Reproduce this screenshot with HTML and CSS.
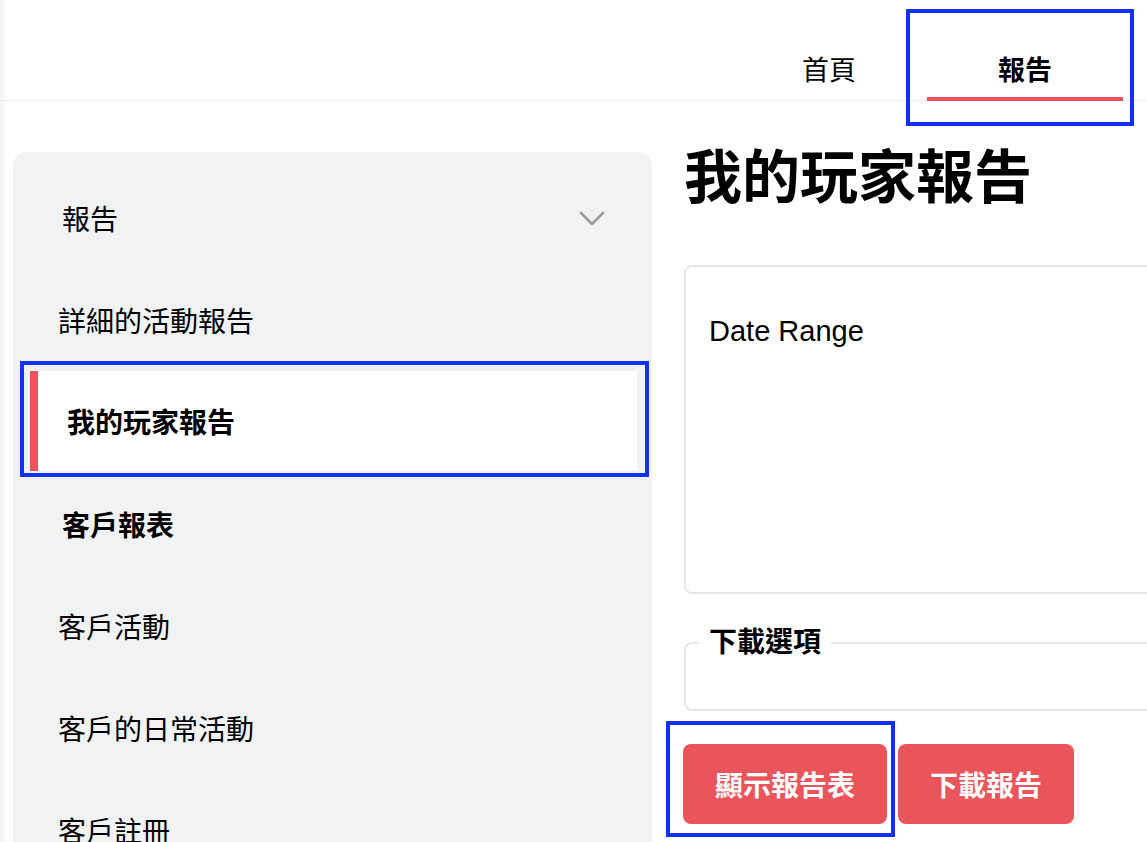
FILE: index.html
```html
<!DOCTYPE html>
<html lang="zh-Hant">
<head>
<meta charset="utf-8">
<title>我的玩家報告</title>
<link rel="stylesheet" href="styles.css">
</head>
<body>
<header class="topbar">
  <nav class="tabs">
    <a class="tab">首頁</a>
    <a class="tab tab-active">報告<span class="hl hl-tab"></span></a>
  </nav>
</header>
<div class="layout">
  <aside class="sidebar">
    <div class="side-head">
      <span>報告</span>
      <svg class="chev" width="26" height="16" viewBox="0 0 26 16"><path d="M2 2 L13 13 L24 2" fill="none" stroke="#9b9b9b" stroke-width="2.6" stroke-linecap="round" stroke-linejoin="round"/></svg>
    </div>
    <div class="side-item">詳細的活動報告</div>
    <div class="side-item side-active">我的玩家報告<span class="hl hl-side"></span></div>
    <div class="side-item side-bold">客戶報表</div>
    <div class="side-item">客戶活動</div>
    <div class="side-item">客戶的日常活動</div>
    <div class="side-item">客戶註冊</div>
  </aside>
  <main class="main">
    <h1 class="title">我的玩家報告</h1>
    <section class="date-box">
      <div class="date-label">Date Range</div>
    </section>
    <fieldset class="options">
      <legend class="options-legend">下載選項</legend>
      <div class="options-body"></div>
    </fieldset>
    <div class="actions">
      <button class="btn">顯示報告表<span class="hl hl-btn"></span></button>
      <button class="btn">下載報告</button>
    </div>
  </main>
</div>
</body>
</html>
```
FILE: styles.css
```css
html, body {
  margin: 0;
  padding: 0;
  overflow: hidden;
}
body {
  width: 1147px;
  height: 842px;
  background: linear-gradient(to right, #f2f2f2 0px, #fbfbfb 5px, #ffffff 9px);
  font-family: "Liberation Sans", "Noto Sans CJK TC", sans-serif;
  color: #000;
}
.topbar {
  height: 101px;
  box-sizing: border-box;
  border-bottom: 1px solid #ececec;
  display: flex;
  justify-content: flex-end;
  padding-right: 24px;
}
.tabs {
  display: flex;
}
.tab {
  position: relative;
  width: 196px;
  height: 101px;
  box-sizing: border-box;
  padding-top: 53px;
  text-align: center;
  font-size: 27px;
  line-height: 36px;
  color: #000;
}
.tab-active {
  font-weight: 700;
  border-bottom: 4px solid #e9555a;
}
.hl {
  position: absolute;
  border: 4px solid #1530f5;
  pointer-events: none;
}
.hl-tab {
  left: -21px;
  right: -11px;
  top: 9px;
  bottom: -29px;
}
.layout {
  display: flex;
  align-items: flex-start;
  padding-left: 13px;
  gap: 32px;
}
.sidebar {
  flex: none;
  margin-top: 51px;
  width: 639px;
  height: 691px;
  overflow: hidden;
  background: #f1f2f4;
  border-radius: 14px 14px 0 0;
  padding-top: 15px;
  box-sizing: border-box;
}
.side-head {
  height: 102px;
  display: flex;
  align-items: center;
  justify-content: space-between;
  padding: 0 47px 0 49px;
  font-size: 28px;
}
.chev {
  display: block;
  margin-top: 2px;
}
.side-item {
  position: relative;
  height: 102px;
  display: flex;
  align-items: center;
  padding-left: 45px;
  font-size: 28px;
}
.side-bold {
  font-weight: 700;
  padding-left: 49px;
}
.side-active {
  margin: 0 15px 0 17px;
  height: 100px;
  margin-bottom: 2px;
  padding-left: 29px;
  background: #fff;
  border-left: 8px solid #e9555a;
  font-weight: 700;
}
.hl-side {
  left: -18px;
  right: -12px;
  top: -10px;
  bottom: -6px;
}
.main {
  margin-top: 43px;
  width: 540px;
  flex: none;
}
.title {
  margin: 0;
  font-size: 58px;
  line-height: 67px;
  font-weight: 700;
}
.date-box {
  margin-top: 54px;
  height: 329px;
  box-sizing: border-box;
  border: 2px solid #e6e6e6;
  border-radius: 8px;
  padding: 46px 0 0 23px;
}
.date-label {
  font-size: 29px;
  line-height: 36px;
}
.options {
  margin: 31px 0 0;
  padding: 0 0 0 13px;
  border: 2px solid #e6e6e6;
  border-radius: 8px;
}
.options-legend {
  padding: 0 10px;
  font-size: 28px;
  line-height: 36px;
  font-weight: 700;
}
.options-body {
  height: 48px;
}
.actions {
  margin-top: 33px;
  display: flex;
  gap: 11px;
  margin-left: -1px;
}
.btn {
  position: relative;
  height: 80px;
  padding: 0 32px;
  border: none;
  border-radius: 8px;
  background: #e9555a;
  color: #fff;
  font-family: "Liberation Sans", "Noto Sans CJK TC", sans-serif;
  font-size: 28px;
  font-weight: 700;
}
.hl-btn {
  left: -17px;
  right: -8px;
  top: -23px;
  bottom: -13px;
}
```
